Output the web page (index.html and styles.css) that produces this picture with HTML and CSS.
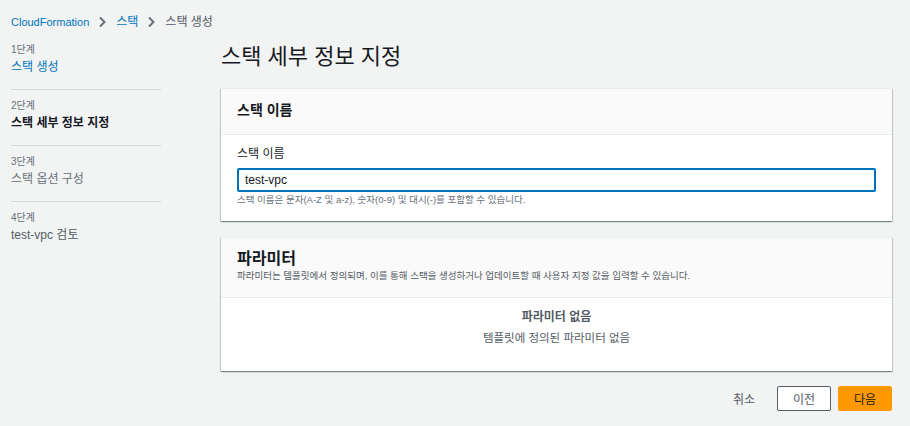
FILE: index.html
```html
<!DOCTYPE html>
<html lang="ko">
<head>
<meta charset="utf-8">
<link rel="stylesheet" href="styles.css">
</head>
<body>
<nav class="crumbs">
  <a class="crumb-link crumb-latin">CloudFormation</a>
  <svg class="chev" width="8" height="12" viewBox="0 0 8 12"><path d="M2 1.5 L6.5 6 L2 10.5" fill="none" stroke="#687078" stroke-width="2"/></svg>
  <a class="crumb-link">스택</a>
  <svg class="chev" width="8" height="12" viewBox="0 0 8 12"><path d="M2 1.5 L6.5 6 L2 10.5" fill="none" stroke="#687078" stroke-width="2"/></svg>
  <span class="crumb-current">스택 생성</span>
</nav>
<div class="layout">
  <aside class="steps">
    <div class="step">
      <div class="step-num">1단계</div>
      <div class="step-title link">스택 생성</div>
    </div>
    <div class="step">
      <div class="step-num">2단계</div>
      <div class="step-title active">스택 세부 정보 지정</div>
    </div>
    <div class="step">
      <div class="step-num">3단계</div>
      <div class="step-title muted">스택 옵션 구성</div>
    </div>
    <div class="step last">
      <div class="step-num">4단계</div>
      <div class="step-title dim">test-vpc 검토</div>
    </div>
  </aside>
  <main class="main">
    <h1 class="page-title">스택 세부 정보 지정</h1>
    <section class="card">
      <div class="card-head head-small">
        <h2 class="card-title-sm">스택 이름</h2>
      </div>
      <div class="card-body form-body">
        <label class="field-label">스택 이름</label>
        <div class="input">test-vpc</div>
        <div class="hint">스택 이름은 문자(A-Z 및 a-z), 숫자(0-9) 및 대시(-)를 포함할 수 있습니다.</div>
      </div>
    </section>
    <section class="card card-params">
      <div class="card-head head-large">
        <h2 class="card-title-lg">파라미터</h2>
        <div class="card-desc">파라미터는 템플릿에서 정의되며, 이를 통해 스택을 생성하거나 업데이트할 때 사용자 지정 값을 입력할 수 있습니다.</div>
      </div>
      <div class="card-body empty-body">
        <div class="empty-title">파라미터 없음</div>
        <div class="empty-text">템플릿에 정의된 파라미터 없음</div>
      </div>
    </section>
    <div class="actions">
      <button class="btn btn-link">취소</button>
      <button class="btn btn-normal">이전</button>
      <button class="btn btn-primary">다음</button>
    </div>
  </main>
</div>
</body>
</html>
```
FILE: styles.css
```css
* { box-sizing: border-box; }
html, body { margin: 0; padding: 0; }
body {
  background: #f2f3f3;
  font-family: "Liberation Sans", "Noto Sans CJK KR", sans-serif;
  color: #16191f;
  width: 910px;
  height: 426px;
  overflow: hidden;
}
.crumbs {
  display: flex;
  align-items: center;
  height: 42px;
  padding: 13px 11px 11px;
  font-size: 12px;
  line-height: 18px;
}
.crumb-link { color: #0073bb; }
.crumb-latin { font-size: 11px; }
.crumb-current { color: #545b64; }
.chev { margin: 0 10px 0 9px; }
.layout { display: flex; }
.steps {
  width: 150px;
  margin-left: 11px;
  flex: none;
}
.step {
  padding: 8px 0 13px;
  border-bottom: 1px solid #d5dbdb;
}
.step:first-child { padding-top: 0; }
.step.last { border-bottom: none; }
.step-num {
  font-size: 10px;
  line-height: 16px;
  color: #687078;
}
.step-title {
  font-size: 12px;
  line-height: 18px;
}
.step-title.link { color: #0073bb; }
.step-title.active { color: #16191f; font-weight: 700; }
.step-title.muted { color: #687078; }
.step-title.dim { color: #545b64; }
.main {
  margin-left: 60px;
  width: 671px;
}
.page-title {
  margin: 0 0 16px;
  font-size: 22px;
  line-height: 30px;
  font-weight: 400;
  color: #16191f;
}
.card {
  background: #fff;
  border-top: 1px solid #eaeded;
  box-shadow: 0 1px 1px 0 rgba(0,28,36,0.3), 1px 1px 1px 0 rgba(0,28,36,0.15), -1px 1px 1px 0 rgba(0,28,36,0.15);
}
.card-params { margin-top: 16px; }
.card-head {
  background: #fafafa;
  border-bottom: 1px solid #eaeded;
  padding-left: 16px;
  padding-right: 16px;
}
.head-small { padding-top: 12px; padding-bottom: 15px; }
.head-large { padding-top: 11px; padding-bottom: 14px; }
.card-title-sm {
  margin: 0;
  font-size: 14px;
  line-height: 18px;
  font-weight: 700;
}
.card-title-lg {
  margin: 0;
  font-size: 16px;
  line-height: 20px;
  font-weight: 700;
}
.card-desc {
  font-size: 9.5px;
  line-height: 14px;
  color: #545b64;
}
.form-body { padding: 11px 16px 14px; }
.field-label {
  display: block;
  font-size: 12px;
  line-height: 16px;
  color: #16191f;
}
.input {
  margin-top: 6px;
  height: 24px;
  border: 2px solid #0073bb;
  border-radius: 2px;
  padding: 0 6px;
  font-size: 12px;
  line-height: 20px;
  color: #16191f;
}
.hint {
  margin-top: 1px;
  font-size: 9.5px;
  line-height: 14px;
  color: #687078;
}
.empty-body {
  padding: 10px 16px 24px;
  text-align: center;
  color: #545b64;
}
.empty-title {
  font-size: 12px;
  line-height: 18px;
  font-weight: 700;
  color: #545b64;
}
.empty-text {
  margin-top: 3px;
  font-size: 11.5px;
  line-height: 18px;
}
.actions {
  display: flex;
  justify-content: flex-end;
  align-items: center;
  margin-top: 15px;
  gap: 7px;
}
.btn {
  font-family: inherit;
  font-size: 12px;
  height: 25px;
  width: 54px;
  border-radius: 2px;
  padding: 0;
  cursor: pointer;
}
.btn-link {
  background: none;
  border: none;
  color: #545b64;
  width: auto;
  padding: 0 15px;
}
.btn-normal {
  background: #fff;
  border: 1px solid #545b64;
  color: #545b64;
}
.btn-primary {
  background: #ff9900;
  border: 1px solid #ff9900;
  color: #16191f;
}
```
